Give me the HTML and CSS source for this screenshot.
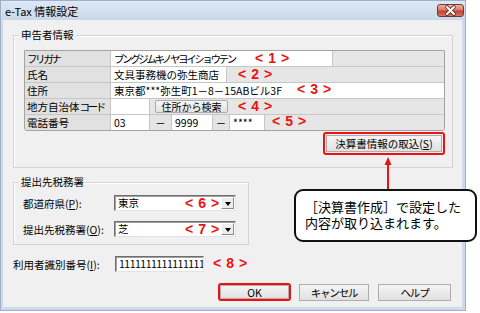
FILE: index.html
```html
<!DOCTYPE html>
<html lang="ja">
<head>
<meta charset="utf-8">
<title>e-Tax 情報設定</title>
<link rel="stylesheet" href="styles.css">
</head>
<body>
<div class="page">
  <div class="window">
    <div class="titlebar">
      <span class="title">e-Tax 情報設定</span>
      <span class="close">
        <svg width="27" height="13" viewBox="0 0 27 13">
          <path d="M10 3 L17 10 M17 3 L10 10" stroke="#5a2a2a" stroke-width="3.6" stroke-linecap="round" fill="none"/>
          <path d="M10 3 L17 10 M17 3 L10 10" stroke="#ffffff" stroke-width="2" stroke-linecap="round" fill="none"/>
        </svg>
      </span>
    </div>
    <div class="client">
      <div class="group g1">
        <span class="legend">申告者情報</span>
        <div class="grid">
          <div class="row">
            <div class="lab"><span class="kana">フリガナ</span></div>
            <div class="val w222"><span class="kana">ブングジムキノヤヨイショウテン</span></div>
            <div class="fill"></div>
          </div>
          <div class="row">
            <div class="lab">氏名</div>
            <div class="val w116">文具事務機の弥生商店</div>
            <div class="fill"></div>
          </div>
          <div class="row">
            <div class="lab">住所</div>
            <div class="val grow">東京都***弥生町1－8－15ABビル3F</div>
          </div>
          <div class="row">
            <div class="lab">地方自治体<span class="kana">コード</span></div>
            <div class="val w39"></div>
            <div class="fill"><span class="minibtn">住所から検索</span></div>
          </div>
          <div class="row last">
            <div class="lab">電話番号</div>
            <div class="val w39">03</div>
            <div class="dash w22">－</div>
            <div class="val w41">9999</div>
            <div class="dash w17">－</div>
            <div class="val w35">****</div>
            <div class="fill"></div>
          </div>
        </div>
        <div class="btnrow">
          <span class="hl"><span class="btn import">決算書情報の取込(<u>S</u>)</span></span>
        </div>
      </div>

      <div class="group g2">
        <span class="legend">提出先税務署</span>
        <div class="frow">
          <span class="flab">都道府県(<u>P</u>):</span>
          <span class="combo"><span class="ctext">東京</span><span class="drop"><span class="tri"></span></span></span>
        </div>
        <div class="frow">
          <span class="flab">提出先税務署(<u>O</u>):</span>
          <span class="combo"><span class="ctext">芝</span><span class="drop"><span class="tri"></span></span></span>
        </div>
      </div>

      <div class="idrow">
        <span class="idlab">利用者識別番号(<u>I</u>):</span>
        <span class="textbox">1111111111111111</span>
      </div>

      <div class="actions">
        <span class="hl okhl"><span class="btn ok">OK</span></span>
        <span class="btn cancel"><span class="kana-s">キャンセル</span></span>
        <span class="btn help"><span class="kana-s">ヘルプ</span></span>
      </div>
    </div>
  </div>

  <span class="mark m1">&lt;1&gt;</span>
  <span class="mark m2">&lt;2&gt;</span>
  <span class="mark m3">&lt;3&gt;</span>
  <span class="mark m4">&lt;4&gt;</span>
  <span class="mark m5">&lt;5&gt;</span>
  <span class="mark m6">&lt;6&gt;</span>
  <span class="mark m7">&lt;7&gt;</span>
  <span class="mark m8">&lt;8&gt;</span>

  <svg class="arrow" width="10" height="34" viewBox="0 0 10 34">
    <polygon points="5,1 1.5,9 8.5,9" fill="#ee1111"/>
    <line x1="5" y1="8" x2="5" y2="34" stroke="#ee1111" stroke-width="2"/>
  </svg>

  <div class="callout">
    <div class="cl">［決算書作成］で設定した</div>
    <div class="cl">内容が取り込まれます。</div>
  </div>
</div>
</body>
</html>
```

FILE: styles.css
```css
html, body {
  margin: 0;
  padding: 0;
}

body {
  background: #ffffff;
  font-family: "Noto Sans CJK JP", "Noto Sans", sans-serif;
  font-size: 10.5px;
  color: #000;
}

.page {
  position: relative;
  width: 480px;
  height: 313px;
  overflow: hidden;
}

.window {
  box-sizing: border-box;
  width: 466px;
  height: 311px;
  border: 1px solid #9fb0c4;
  background: #cddaea;
  display: flex;
  flex-direction: column;
}

.titlebar {
  height: 19px;
  flex: none;
  display: flex;
  align-items: center;
  padding: 0 1px 0 4px;
  background: linear-gradient(#dde8f5, #c9d8ea);
}

.title {
  font-size: 11px;
  line-height: 14px;
}

.close {
  margin-left: auto;
  box-sizing: border-box;
  width: 27px;
  height: 13px;
  border: 1px solid #6e3a3a;
  border-radius: 3px;
  background: linear-gradient(#eab0a4 0%, #d97a68 45%, #c2412f 55%, #d8745e 100%);
  display: flex;
  align-items: center;
  justify-content: center;
}

.close svg {
  display: block;
  margin: -1px;
}

.client {
  flex: 1;
  margin: 0 3px 3px 2px;
  background: #f0f0f0;
  padding: 15px 0 0 10px;
}

.kana {
  letter-spacing: -2.4px;
}

.kana-s {
  letter-spacing: -1.2px;
}

/* group boxes */
.group {
  position: relative;
  box-sizing: border-box;
  border: 1px solid #d4d4d4;
  box-shadow: inset 1px 1px 0 #ffffff;
}

.legend {
  position: absolute;
  top: -8px;
  left: 5px;
  padding: 0 2px;
  background: #f0f0f0;
  line-height: 14px;
}

.g1 {
  width: 440px;
  height: 133px;
  padding: 14px 0 0 10px;
}

/* info grid */
.grid {
  box-sizing: border-box;
  width: 421px;
  border: 1px solid #a3a3a3;
  border-radius: 0 0 3px 3px;
  background: #e6e6e6;
  overflow: hidden;
}

.row {
  box-sizing: border-box;
  height: 16px;
  display: flex;
  border-bottom: 1px solid #c6c6c6;
  line-height: 15px;
}

.row.last {
  height: 15px;
  border-bottom: none;
}

.lab {
  box-sizing: border-box;
  width: 86px;
  flex: none;
  padding-left: 2px;
  background: #e1e1e1;
  border-right: 1px solid #c6c6c6;
  white-space: nowrap;
}

.val {
  box-sizing: border-box;
  flex: none;
  padding-left: 3px;
  background: #ffffff;
  border-right: 1px solid #c6c6c6;
  white-space: nowrap;
  overflow: hidden;
}

.val.grow {
  flex: 1;
  border-right: none;
}

.w222 { width: 222px; }
.w116 { width: 116px; }
.w39 { width: 39px; }
.w41 { width: 41px; }
.w35 { width: 35px; }
.w22 { width: 22px; }
.w17 { width: 17px; }

.dash {
  box-sizing: border-box;
  flex: none;
  background: #e4e4e4;
  border-right: 1px solid #c6c6c6;
  text-align: center;
}

.fill {
  flex: 1;
  background: #e6e6e6;
  display: flex;
  align-items: center;
}

.minibtn {
  box-sizing: border-box;
  margin-left: 5px;
  width: 73px;
  height: 13px;
  border: 1px solid #acacac;
  border-radius: 2px;
  background: linear-gradient(#f6f6f6, #e2e2e2);
  font-size: 10px;
  line-height: 11px;
  text-align: center;
}

/* buttons */
.btnrow {
  width: 421px;
  margin-top: 1px;
  display: flex;
  justify-content: flex-end;
}

.hl {
  box-sizing: border-box;
  display: flex;
  border: 2px solid #ee1111;
  border-radius: 3px;
  padding: 1px;
  background: #f0f0f0;
}

.btn {
  box-sizing: border-box;
  display: flex;
  align-items: center;
  justify-content: center;
  border: 1px solid #adadad;
  background: linear-gradient(#f4f4f4, #e1e1e1);
  white-space: nowrap;
}

.import {
  width: 116px;
  height: 17px;
}

/* second group */
.g2 {
  margin-top: 14px;
  width: 236px;
  height: 63px;
  padding: 12px 0 0 9px;
}

.frow {
  display: flex;
  align-items: center;
  height: 16px;
  margin-bottom: 10px;
}

.flab {
  width: 91px;
  flex: none;
  white-space: nowrap;
}

.combo {
  box-sizing: border-box;
  width: 122px;
  height: 16px;
  display: flex;
  align-items: center;
  background: #ffffff;
  border: 1px solid;
  border-color: #6f6f6f #e3e3e3 #e3e3e3 #6f6f6f;
  box-shadow: inset 1px 1px 0 #a0a0a0;
}

.ctext {
  flex: 1;
  padding-left: 3px;
  line-height: 14px;
}

.drop {
  box-sizing: border-box;
  width: 13px;
  height: 12px;
  margin-right: 1px;
  background: #ececec;
  border: 1px solid;
  border-color: #ffffff #8a8a8a #8a8a8a #ffffff;
  display: flex;
  align-items: center;
  justify-content: center;
}

.tri {
  width: 0;
  height: 0;
  border-left: 3px solid transparent;
  border-right: 3px solid transparent;
  border-top: 4px solid #000;
  margin-top: 1px;
}

/* id row */
.idrow {
  margin-top: 11px;
  height: 16px;
  display: flex;
  align-items: center;
}

.idlab {
  width: 102px;
  flex: none;
  white-space: nowrap;
}

.textbox {
  box-sizing: border-box;
  width: 89px;
  height: 16px;
  padding-left: 3px;
  background: #ffffff;
  border: 1px solid;
  border-color: #6f6f6f #e3e3e3 #e3e3e3 #6f6f6f;
  box-shadow: inset 1px 1px 0 #a0a0a0;
  line-height: 14px;
  letter-spacing: -0.5px;
  white-space: nowrap;
  overflow: hidden;
}

/* bottom actions */
.actions {
  margin-top: 11px;
  margin-left: 205px;
  display: flex;
  align-items: center;
}

.okhl {
  width: 73px;
  height: 18px;
  padding: 0;
}

.ok {
  flex: 1;
}

.cancel {
  margin-left: 8px;
  width: 70px;
  height: 17px;
}

.help {
  margin-left: 9px;
  width: 73px;
  height: 17px;
}

/* red annotations overlaying the dialog */
.mark {
  position: absolute;
  font-family: "Liberation Sans", Arial, sans-serif;
  font-weight: bold;
  font-size: 14px;
  line-height: 16px;
  letter-spacing: 5px;
  color: #ee1111;
  white-space: nowrap;
}

.m1 { left: 255px; top: 50px; }
.m2 { left: 238px; top: 66px; }
.m3 { left: 297px; top: 81px; }
.m4 { left: 238px; top: 98px; }
.m5 { left: 272px; top: 113px; }
.m6 { left: 185px; top: 195px; }
.m7 { left: 185px; top: 221px; }
.m8 { left: 213px; top: 255px; }

.arrow {
  position: absolute;
  left: 383px;
  top: 156px;
}

.callout {
  position: absolute;
  left: 294px;
  top: 189px;
  box-sizing: border-box;
  width: 183px;
  height: 53px;
  padding: 8px 0 0 9px;
  border: 2px solid #111111;
  border-radius: 9px;
  background: #ffffff;
  font-size: 13px;
  line-height: 16px;
  white-space: nowrap;
}

.cl {
  height: 16px;
}
```
